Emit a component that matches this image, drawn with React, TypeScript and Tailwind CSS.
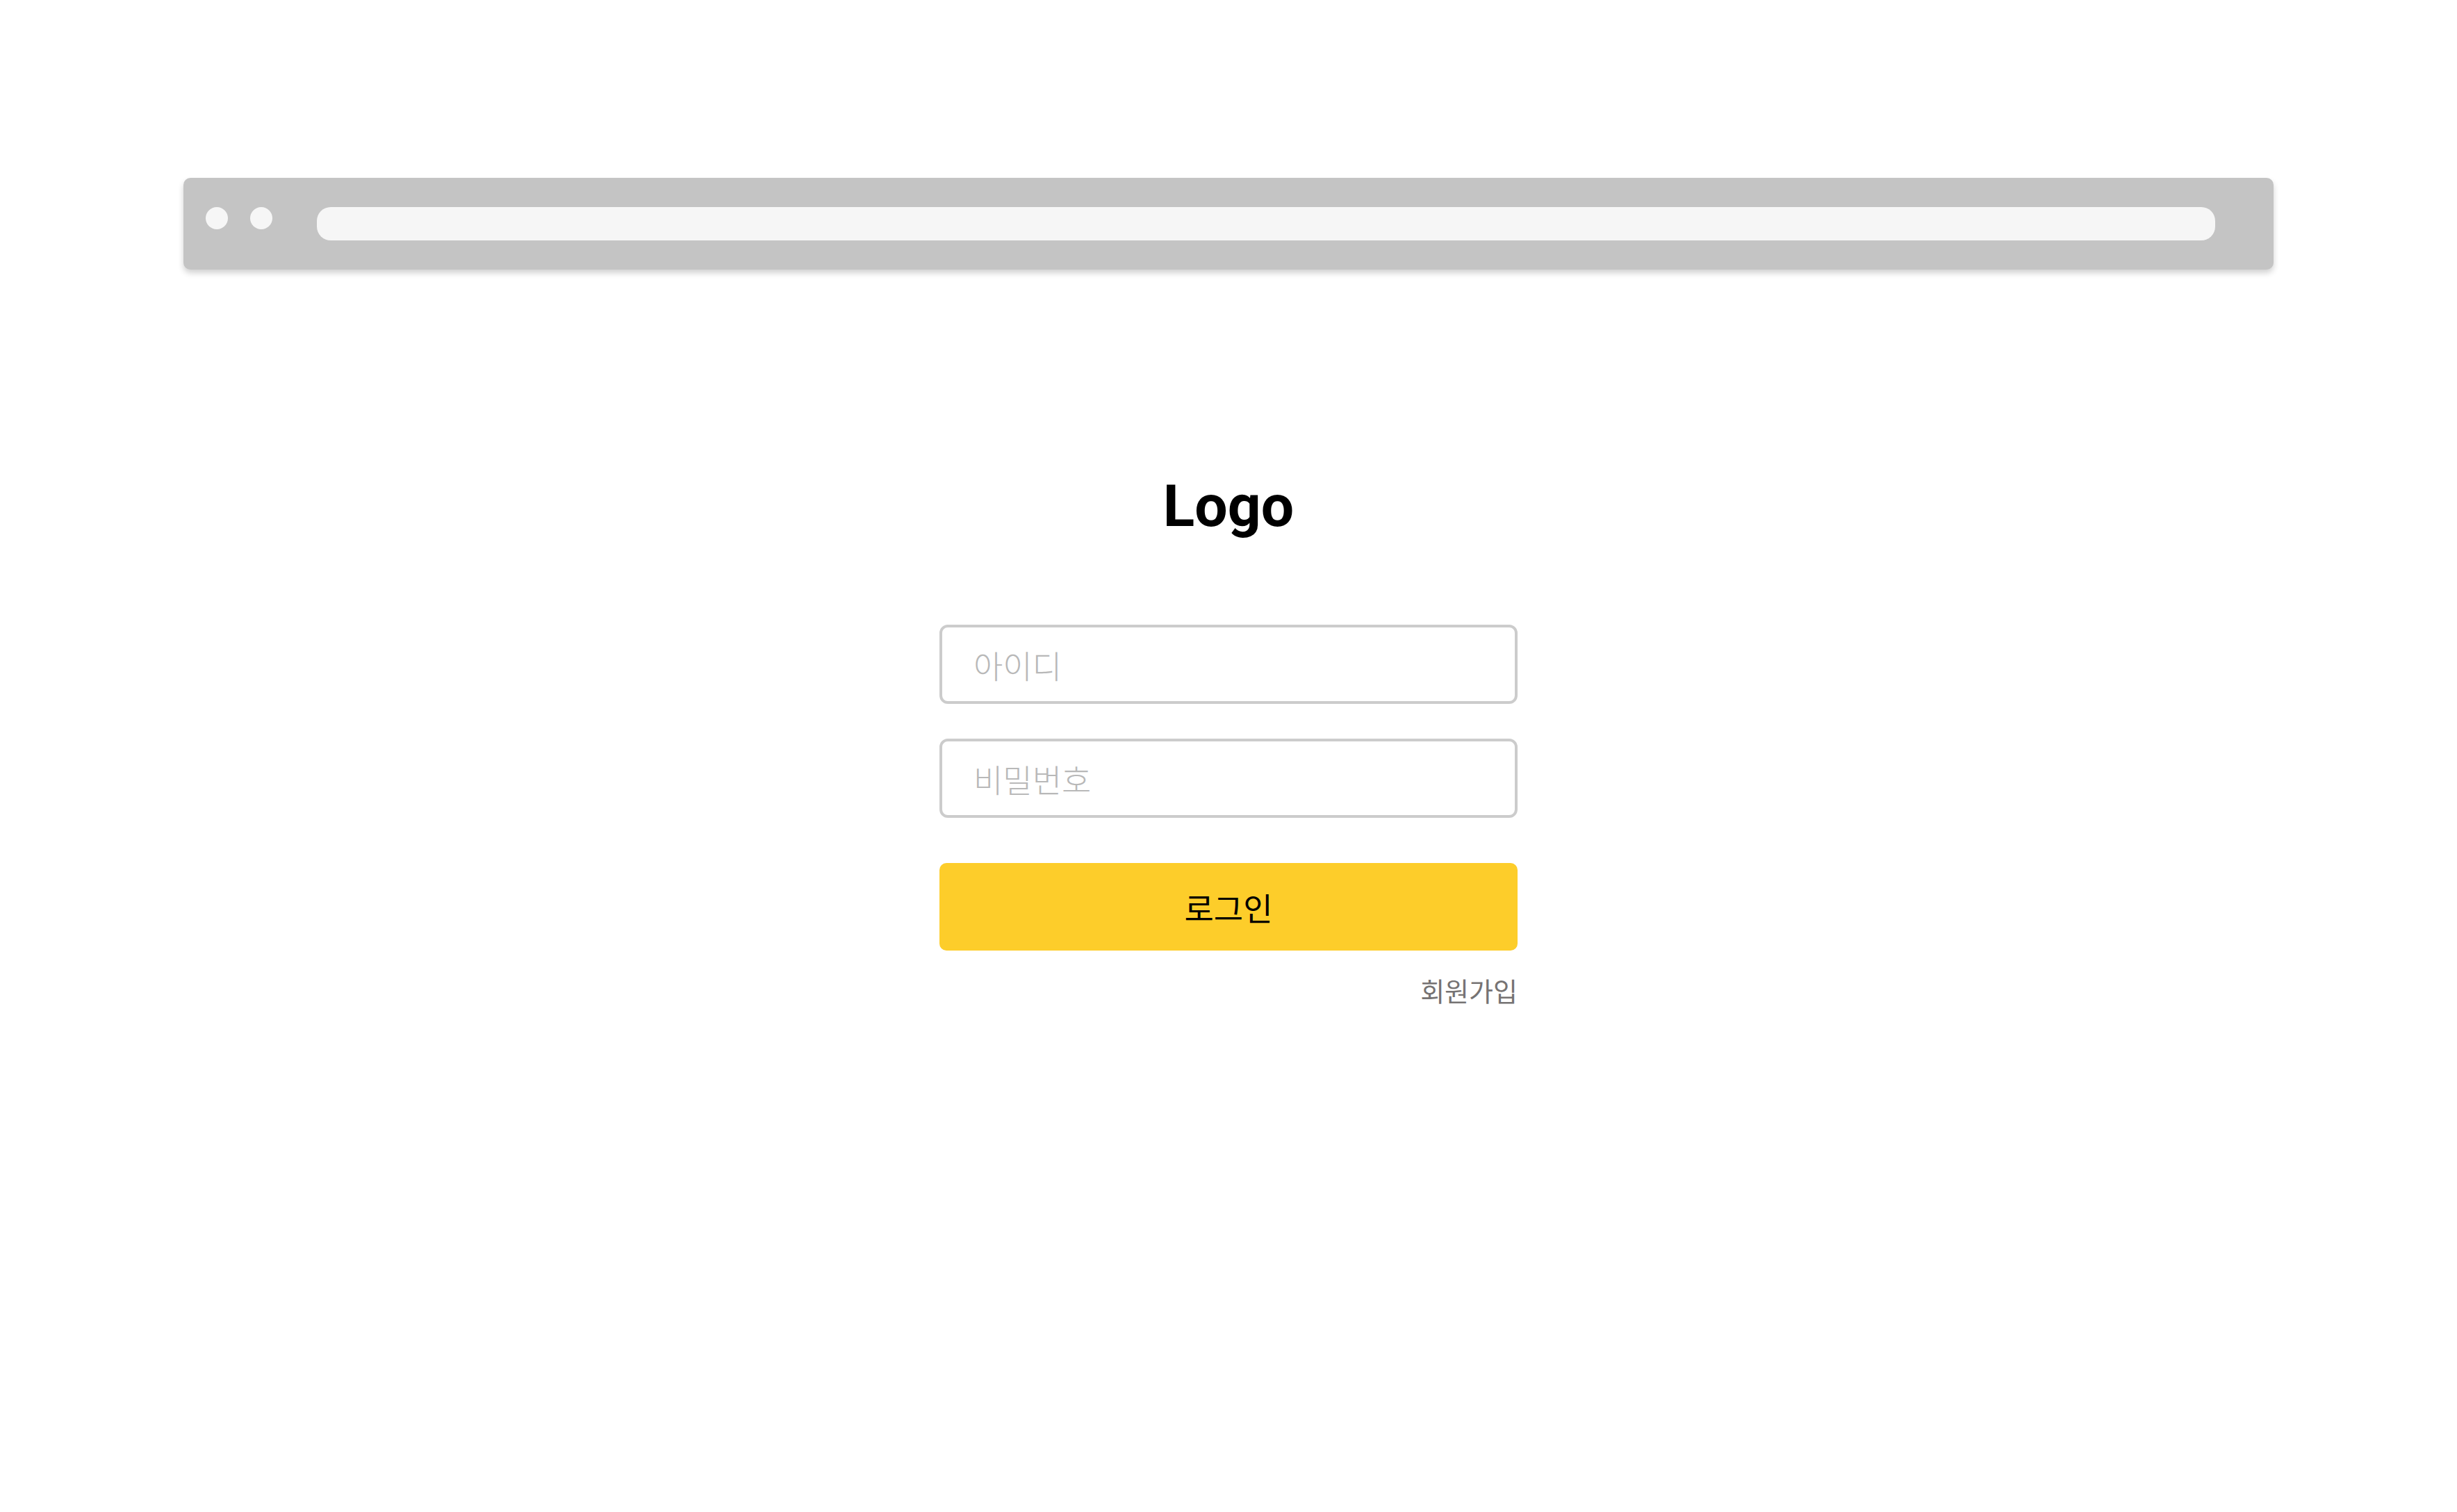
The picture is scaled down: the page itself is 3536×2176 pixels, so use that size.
import React from 'react';

const LoginPage: React.FC = () => {
  return (
    <div className="min-h-screen bg-white">
      {/* Browser chrome */}
      <div className="px-[264px] pt-[256px]">
        <div className="flex items-start h-[132px] pt-[42px] pl-8 pr-[84px] rounded-[10px] bg-[#c4c4c4] shadow-[0_5px_8px_rgba(0,0,0,0.18)]">
          <div className="flex gap-8">
            <span className="w-8 h-8 rounded-full bg-[#f6f6f6]" />
            <span className="w-8 h-8 rounded-full bg-[#f6f6f6]" />
          </div>
          <div className="ml-16 flex-1 h-12 rounded-[20px] bg-[#f6f6f6]" />
        </div>
      </div>

      {/* Login form */}
      <div className="flex flex-col items-center pt-[299px]">
        <h1 className="font-['Roboto',sans-serif] font-bold text-[84px] leading-none text-black">Logo</h1>

        <form className="mt-[128px] w-[832px] flex flex-col font-['Noto_Sans_CJK_KR',sans-serif]">
          <input
            type="text"
            placeholder="아이디"
            className="h-[114px] px-[45px] border-4 border-[#cccccc] rounded-[12px] text-[46px] font-light outline-none placeholder:text-[#b8b8b8]"
          />
          <input
            type="password"
            placeholder="비밀번호"
            className="mt-[50px] h-[114px] px-[45px] border-4 border-[#cccccc] rounded-[12px] text-[46px] font-light outline-none placeholder:text-[#b8b8b8]"
          />
          <button
            type="button"
            className="mt-[65px] h-[126px] rounded-[10px] bg-[#fdcd2a] text-[46px] text-black"
          >
            로그인
          </button>
          <div className="mt-[38px] flex justify-end">
            <a href="#" className="text-[38px] leading-none text-[#767373]">회원가입</a>
          </div>
        </form>
      </div>
    </div>
  );
};

export default LoginPage;
